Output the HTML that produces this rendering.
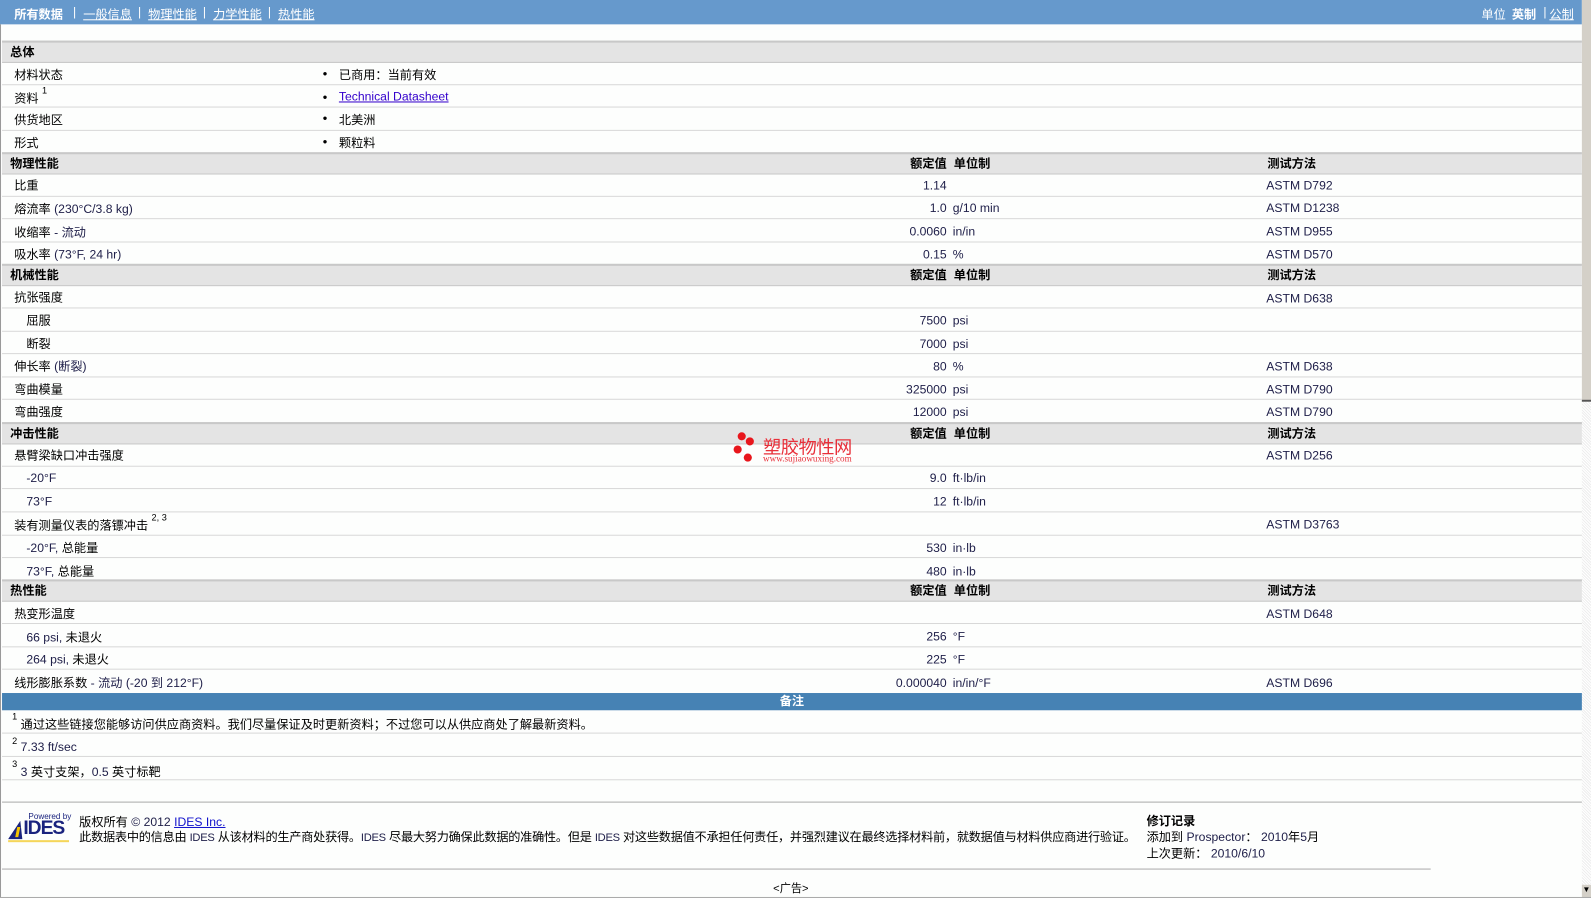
<!DOCTYPE html>
<html><head><meta charset="utf-8"><style>
html,body{margin:0;padding:0;background:#fdfefd;overflow:hidden;width:1591px;height:898px}
#w{position:absolute;left:0;top:0;width:1568px;height:885px;transform:scale(1.01467);transform-origin:0 0;font-family:"Liberation Sans","Noto Sans CJK SC",sans-serif;font-size:12px;color:#000}
.a{position:absolute;white-space:nowrap}
#top{position:absolute;left:0;top:0;width:1559px;height:24px;background:#6699cc;color:#fff}
#top span{position:absolute;top:5px}
#top u{text-decoration:underline}
.sec{position:absolute;left:2px;width:1557px;height:19px;background:#e4e4e4;border-top:2px solid #c8c8c8;border-bottom:1px solid #c8c8c8;font-weight:bold}
.sec .a{top:0px !important}
.row{position:absolute;left:2px;width:1557px;border-bottom:1px solid #d8d8d8}
.v{color:#20204a}
.b{font-weight:bold}
.bl{font-size:8px;margin-top:3px}
sup{font-size:9px;vertical-align:top;position:relative;top:-4px}
</style></head><body><div id="w">
<div id="top">
<span style="left:14px;font-weight:bold">所有数据</span>
<span style="left:72px">|</span><span style="left:82px"><u>一般信息</u></span>
<span style="left:136px">|</span><span style="left:146px"><u>物理性能</u></span>
<span style="left:200px">|</span><span style="left:210px"><u>力学性能</u></span>
<span style="left:264px">|</span><span style="left:274px"><u>热性能</u></span>
<span style="left:1460px">单位</span><span style="left:1490px;font-weight:bold">英制</span>
<span style="left:1521px">|</span><span style="left:1527px"><u>公制</u></span>
</div>
<div style="position:absolute;left:0;top:24px;width:1px;height:861px;background:#999"></div>
<div style="position:absolute;left:1559px;top:0;width:9px;height:394px;background:#d4d0c8;border-bottom:2px solid #555"></div>
<div style="position:absolute;left:1559px;top:396px;width:9px;height:478px;background:repeating-linear-gradient(45deg,#eee 0 1px,#fff 1px 2px)"></div>
<div style="position:absolute;left:1559px;top:872px;width:9px;height:13px;background:#d4d0c8;font-size:8px;text-align:center">▼</div>

<div class="sec" style="top:40px"><span class="a" style="left:8px">总体</span></div>
<div class="row" style="top:62px;height:21px"><span class="a" style="left:12px;top:3px">材料状态</span><span class="a bl" style="left:316px;top:3px">●</span><span class="a" style="left:332px;top:3px">已商用：当前有效</span></div>
<div class="row" style="top:84px;height:21px"><span class="a" style="left:12px;top:4px">资料 <sup>1</sup></span><span class="a bl" style="left:316px;top:4px">●</span><span class="a" style="left:332px;top:4px;color:#3300cc;text-decoration:underline">Technical Datasheet</span></div>
<div class="row" style="top:106px;height:22px"><span class="a" style="left:12px;top:3px">供货地区</span><span class="a bl" style="left:316px;top:3px">●</span><span class="a" style="left:332px;top:3px">北美洲</span></div>
<div class="row" style="top:129px;height:21px;border:0"><span class="a" style="left:12px;top:3px">形式</span><span class="a bl" style="left:316px;top:3px">●</span><span class="a" style="left:332px;top:3px">颗粒料</span></div>

<div class="sec" style="top:150px"><span class="a" style="left:8px">物理性能</span><span class="a" style="right:626px">额定值</span><span class="a" style="left:938px">单位制</span><span class="a" style="left:1247px">测试方法</span></div>
<div class="row" style="top:172px;height:21px"><span class="a" style="left:12px;top:2px">比重</span><span class="a v" style="right:626px;top:4px">1.14</span><span class="a v" style="left:1246px;top:4px">ASTM D792</span></div>
<div class="row" style="top:194px;height:21px"><span class="a" style="left:12px;top:3px">熔流率 <span class="v">(230°C/3.8 kg)</span></span><span class="a v" style="right:626px;top:4px">1.0</span><span class="a v" style="left:937px;top:4px">g/10 min</span><span class="a v" style="left:1246px;top:4px">ASTM D1238</span></div>
<div class="row" style="top:216px;height:22px"><span class="a" style="left:12px;top:4px">收缩率 <span class="v">- 流动</span></span><span class="a v" style="right:626px;top:5px">0.0060</span><span class="a v" style="left:937px;top:5px">in/in</span><span class="a v" style="left:1246px;top:5px">ASTM D955</span></div>
<div class="row" style="top:239px;height:21px;border:0"><span class="a" style="left:12px;top:3px">吸水率 <span class="v">(73°F, 24 hr)</span></span><span class="a v" style="right:626px;top:5px">0.15</span><span class="a v" style="left:937px;top:5px">%</span><span class="a v" style="left:1246px;top:5px">ASTM D570</span></div>

<div class="sec" style="top:260px"><span class="a" style="left:8px">机械性能</span><span class="a" style="right:626px">额定值</span><span class="a" style="left:938px">单位制</span><span class="a" style="left:1247px">测试方法</span></div>
<div class="row" style="top:282px;height:21px"><span class="a" style="left:12px;top:2px">抗张强度</span><span class="a v" style="left:1246px;top:5px">ASTM D638</span></div>
<div class="row" style="top:304px;height:22px"><span class="a" style="left:24px;top:3px">屈服</span><span class="a v" style="right:626px;top:5px">7500</span><span class="a v" style="left:937px;top:5px">psi</span></div>
<div class="row" style="top:327px;height:21px"><span class="a" style="left:24px;top:3px">断裂</span><span class="a v" style="right:626px;top:5px">7000</span><span class="a v" style="left:937px;top:5px">psi</span></div>
<div class="row" style="top:349px;height:22px"><span class="a" style="left:12px;top:3px">伸长率 <span class="v">(断裂)</span></span><span class="a v" style="right:626px;top:5px">80</span><span class="a v" style="left:937px;top:5px">%</span><span class="a v" style="left:1246px;top:5px">ASTM D638</span></div>
<div class="row" style="top:372px;height:21px"><span class="a" style="left:12px;top:3px">弯曲模量</span><span class="a v" style="right:626px;top:5px">325000</span><span class="a v" style="left:937px;top:5px">psi</span><span class="a v" style="left:1246px;top:5px">ASTM D790</span></div>
<div class="row" style="top:394px;height:22px;border:0"><span class="a" style="left:12px;top:3px">弯曲强度</span><span class="a v" style="right:626px;top:5px">12000</span><span class="a v" style="left:937px;top:5px">psi</span><span class="a v" style="left:1246px;top:5px">ASTM D790</span></div>

<div class="sec" style="top:416px"><span class="a" style="left:8px">冲击性能</span><span class="a" style="right:626px">额定值</span><span class="a" style="left:938px">单位制</span><span class="a" style="left:1247px">测试方法</span></div>
<div class="row" style="top:438px;height:21px"><span class="a" style="left:12px;top:2px">悬臂梁缺口冲击强度</span><span class="a v" style="left:1246px;top:4px">ASTM D256</span></div>
<div class="row" style="top:460px;height:21px"><span class="a v" style="left:24px;top:4px">-20°F</span><span class="a v" style="right:626px;top:4px">9.0</span><span class="a v" style="left:937px;top:4px">ft·lb/in</span></div>
<div class="row" style="top:482px;height:22px"><span class="a v" style="left:24px;top:5px">73°F</span><span class="a v" style="right:626px;top:5px">12</span><span class="a v" style="left:937px;top:5px">ft·lb/in</span></div>
<div class="row" style="top:505px;height:22px"><span class="a" style="left:12px;top:4px">装有测量仪表的落镖冲击 <sup>2, 3</sup></span><span class="a v" style="left:1246px;top:5px">ASTM D3763</span></div>
<div class="row" style="top:528px;height:21px"><span class="a" style="left:24px;top:3px"><span class="v">-20°F,</span> 总能量</span><span class="a v" style="right:626px;top:5px">530</span><span class="a v" style="left:937px;top:5px">in·lb</span></div>
<div class="row" style="top:550px;height:21px;border:0"><span class="a" style="left:24px;top:4px"><span class="v">73°F,</span> 总能量</span><span class="a v" style="right:626px;top:6px">480</span><span class="a v" style="left:937px;top:6px">in·lb</span></div>

<div class="sec" style="top:571px"><span class="a" style="left:8px">热性能</span><span class="a" style="right:626px">额定值</span><span class="a" style="left:938px">单位制</span><span class="a" style="left:1247px">测试方法</span></div>
<div class="row" style="top:594px;height:20px"><span class="a" style="left:12px;top:2px">热变形温度</span><span class="a v" style="left:1246px;top:4px">ASTM D648</span></div>
<div class="row" style="top:615px;height:22px"><span class="a" style="left:24px;top:4px"><span class="v">66 psi,</span> 未退火</span><span class="a v" style="right:626px;top:5px">256</span><span class="a v" style="left:937px;top:5px">°F</span></div>
<div class="row" style="top:638px;height:21px"><span class="a" style="left:24px;top:3px"><span class="v">264 psi,</span> 未退火</span><span class="a v" style="right:626px;top:5px">225</span><span class="a v" style="left:937px;top:5px">°F</span></div>
<div class="row" style="top:660px;height:22px;border:0"><span class="a" style="left:12px;top:4px">线形膨胀系数 <span class="v">- 流动 (-20 到 212°F)</span></span><span class="a v" style="right:626px;top:6px">0.000040</span><span class="a v" style="left:937px;top:6px">in/in/°F</span><span class="a v" style="left:1246px;top:6px">ASTM D696</span></div>

<div style="position:absolute;left:2px;top:683px;width:1557px;height:17px;background:#4682b4;color:#fff;font-weight:bold;text-align:center;line-height:16px">备注</div>
<div class="row" style="top:700px;height:22px"><span class="a" style="left:10px;top:5px"><sup>1</sup> 通过这些链接您能够访问供应商资料。我们尽量保证及时更新资料；不过您可以从供应商处了解最新资料。</span></div>
<div class="row" style="top:723px;height:22px"><span class="a" style="left:10px;top:6px"><sup>2</sup> <span class="v">7.33 ft/sec</span></span></div>
<div class="row" style="top:746px;height:22px"><span class="a" style="left:10px;top:6px"><sup>3</sup> <span class="v">3</span> 英寸支架，<span class="v">0.5</span> 英寸标靶</span></div>
<div style="position:absolute;left:2px;top:790px;width:1557px;height:1px;background:#aaa"></div>

<div class="a" style="left:8px;top:800px;width:62px;height:30px">
<span class="a" style="left:20px;top:0;font-size:8px;color:#1a237e">Powered by</span>
<svg class="a" style="left:0;top:7px" width="20" height="22"><polygon points="0,20 12,2 14,20" fill="#1a237e"/><path d="M9 8 l3 0 l-2 10 l-3 0z" fill="#f5c400"/></svg>
<span class="a" style="left:15px;top:6px;font-size:19px;font-weight:bold;color:#1a237e;letter-spacing:-1px">IDES</span>
<div class="a" style="left:0;top:28px;width:60px;height:2px;background:#f5d65a"></div>
</div>
<span class="a" style="left:78px;top:801px">版权所有 <span class="v">© 2012</span> <span style="color:#1010cc;text-decoration:underline">IDES Inc.</span></span>
<span class="a" style="left:78px;top:816px;letter-spacing:-0.25px">此数据表中的信息由 <span class="v" style="font-size:11px">IDES</span> 从该材料的生产商处获得。<span class="v" style="font-size:11px">IDES</span> 尽最大努力确保此数据的准确性。但是 <span class="v" style="font-size:11px">IDES</span> 对这些数据值不承担任何责任，并强烈建议在最终选择材料前，就数据值与材料供应商进行验证。</span>
<span class="a b" style="left:1130px;top:800px">修订记录</span>
<span class="a" style="left:1130px;top:816px">添加到 <span class="v">Prospector</span>： <span class="v">2010</span>年<span class="v">5</span>月</span>
<span class="a" style="left:1130px;top:832px">上次更新： <span class="v">2010/6/10</span></span>
<div style="position:absolute;left:2px;top:856px;width:1408px;height:1px;background:#aaa"></div>
<span class="a" style="left:762px;top:867px;font-size:11px">&lt;广告&gt;</span>
<div style="position:absolute;left:0;top:884px;width:1568px;height:1px;background:#aaa"></div>

<div class="a" style="left:722px;top:425px;width:130px;height:34px">
<div class="a" style="left:5px;top:1px;width:8px;height:8px;border-radius:50%;background:#e8161c"></div>
<div class="a" style="left:13px;top:6px;width:8px;height:8px;border-radius:50%;background:#e8161c"></div>
<div class="a" style="left:1px;top:14px;width:8px;height:8px;border-radius:50%;background:#e8161c"></div>
<div class="a" style="left:11px;top:22px;width:8px;height:8px;border-radius:50%;background:#e8161c"></div>
<span class="a" style="left:30px;top:2px;font-size:18px;color:#e8303a;letter-spacing:-0.5px">塑胶物性网</span>
<span class="a" style="left:30px;top:22px;font-size:9px;color:#e8303a;font-family:'Liberation Serif',serif">www.sujiaowuxing.com</span>
</div>
</div></body></html>
